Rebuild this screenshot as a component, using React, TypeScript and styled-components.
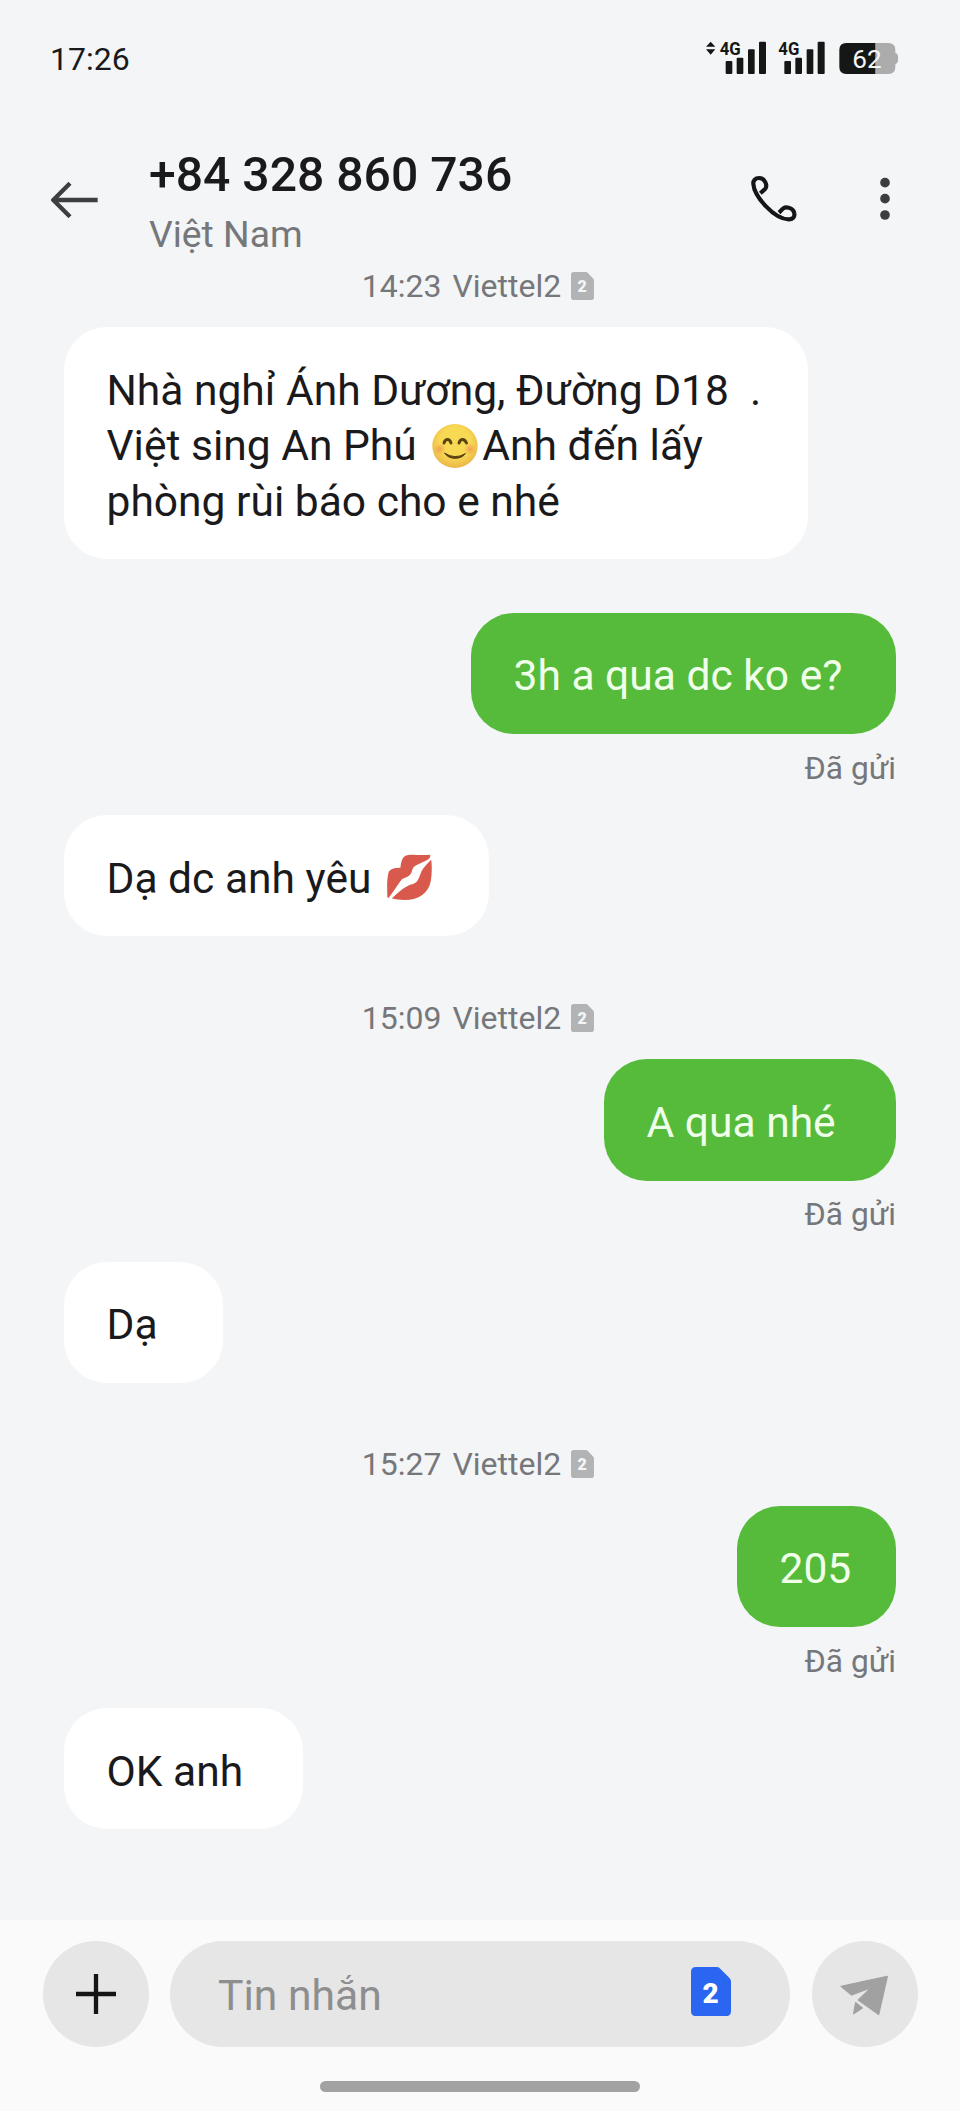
import React from "react";
import styled, { createGlobalStyle } from "styled-components";

const GlobalStyle = createGlobalStyle`
  *, *::before, *::after { box-sizing: border-box; }
  body { margin: 0; background: #f3f5f7; }
`;

const Screen = styled.main`
  width: 960px;
  height: 2111px;
  display: flex;
  flex-direction: column;
  background: #f3f5f7;
  color: #1a1a1c;
  font-family: Roboto, "Noto Sans", sans-serif;
  overflow: hidden;

  svg { display: block; flex: none; }
  svg text { font-family: Roboto, sans-serif; }
`;

const StatusBar = styled.div`
  height: 118px;
  padding: 0 60px 0 50px;
  display: flex;
  align-items: center;
  justify-content: space-between;
`;

const Clock = styled.span`
  padding-bottom: 1px;
  font-size: 32px;
  line-height: 36px;
`;

const StatusIcons = styled.div`
  padding-bottom: 4px;
`;

const Header = styled.header`
  height: 149px;
  padding-left: 51px;
  display: flex;
  align-items: flex-start;
`;

const IconButton = styled.button<{ $top: number; $left?: number }>`
  padding: 0;
  border: 0;
  background: none;
  margin: ${(p) => p.$top}px 0 0 ${(p) => p.$left ?? 0}px;
`;

const Contact = styled.div`
  width: 602px;
  padding: 28.5px 0 0 50px;
`;

const PhoneNumber = styled.h1`
  margin: 0;
  font-size: 48.1px;
  font-weight: 500;
  line-height: 56px;
  white-space: nowrap;
`;

const Country = styled.p`
  margin: 9px 0 0;
  font-size: 37.3px;
  line-height: 44px;
  color: #76777a;
`;

const Thread = styled.section`
  flex: 1;
  display: flex;
  flex-direction: column;
  padding: 0 64px;
`;

const Stamp = styled.div<{ $first?: boolean }>`
  height: 38px;
  margin: ${(p) => (p.$first ? 0 : 62.4)}px 0 ${(p) => (p.$first ? 22 : 22.5)}px;
  padding-right: 4px;
  display: flex;
  align-items: center;
  justify-content: center;
  font-size: 32px;
  line-height: 38px;
  color: #76777a;
  white-space: pre;

  svg { margin-left: 10px; }
`;

const Carrier = styled.span`
  margin-left: 11px;
`;

const Bubble = styled.div<{ $sent?: boolean; $width: number; $gap?: number }>`
  align-self: ${(p) => (p.$sent ? "flex-end" : "flex-start")};
  width: ${(p) => p.$width}px;
  margin-top: ${(p) => p.$gap ?? 0}px;
  padding: 35.5px 0 30.4px 42.5px;
  border-radius: 43px;
  background: ${(p) => (p.$sent ? "#56bb3a" : "#ffffff")};
  color: ${(p) => (p.$sent ? "#f0ffe9" : "#1a1a1c")};
  font-size: 42.55px;
  line-height: 55.5px;
  white-space: pre;
`;

const Line = styled.div`
  height: 55.5px;
  display: flex;
  align-items: center;
`;

const Emoji = styled.span<{ $lift?: number }>`
  flex: none;
  margin: 0 4px 0 5px;
  padding-bottom: ${(p) => p.$lift ?? 0}px;
`;

const Delivery = styled.div`
  align-self: flex-end;
  margin: 15.5px 0 27.3px;
  font-size: 31.7px;
  line-height: 38px;
  color: #76777a;
`;

const Composer = styled.footer`
  height: 191px;
  padding: 21px 42.5px 0;
  background: #fafafa;
`;

const ComposerRow = styled.div`
  display: flex;
  gap: 21.5px;
`;

const RoundButton = styled.button`
  width: 106px;
  height: 106px;
  padding: 0;
  border: 0;
  border-radius: 50%;
  background: #e6e6e6;
`;

const Field = styled.div`
  flex: 1;
  height: 106px;
  padding: 0 59px 5px 48px;
  border-radius: 54px;
  background: #e6e6e6;
  display: flex;
  align-items: center;
  justify-content: space-between;
`;

const Placeholder = styled.span`
  padding-top: 6px;
  font-size: 42.67px;
  line-height: 56px;
  color: #8e8e8e;
`;

const HomeBar = styled.div`
  width: 320px;
  height: 11px;
  margin: 34px auto 0;
  border-radius: 6px;
  background: #a2a2a2;
`;

const SimCard = ({ size, fill, color }: { size: number; fill: string; color: string }) => (
  <svg width={size} height={size * 1.23} viewBox="0 0 40 49">
    <path
      d="M5 0H25.5Q27.500 0 29 1.400L38.500 11Q40 12.500 40 14.500V44Q40 49 35 49H5Q0 49 0 44V5Q0 0 5 0Z"
      fill={fill}
    />
    <text x="19.500" y="35.500" fontSize="28" fontWeight="900" textAnchor="middle" fill={color}>
      2
    </text>
  </svg>
);

const Signal = ({ x }: { x: number }) => (
  <g>
    <text x={x - 18} y="105" fontSize="57" fontWeight="700" textLength="63" lengthAdjust="spacingAndGlyphs">
      4G
    </text>
    <rect x={x} y="123" width="20" height="39" rx="3" />
    <rect x={x + 33} y="113" width="20" height="49" rx="3" />
    <rect x={x + 67} y="88" width="20" height="74" rx="3" />
    <rect x={x + 100} y="65" width="21" height="97" rx="3" />
  </g>
);

const Smile = () => (
  <svg width="46" height="44" viewBox="0 0 46 44">
    <defs>
      <radialGradient id="face" cx="0.5" cy="0.42" r="0.58">
        <stop offset="0.6" stopColor="#f8d954" />
        <stop offset="1" stopColor="#e9b547" />
      </radialGradient>
      <radialGradient id="blush">
        <stop offset="0" stopColor="#f08a50" stopOpacity="0.7" />
        <stop offset="1" stopColor="#f08a50" stopOpacity="0" />
      </radialGradient>
    </defs>
    <ellipse cx="23" cy="22" rx="22.700" ry="22" fill="url(#face)" />
    <circle cx="8" cy="25" r="6" fill="url(#blush)" />
    <circle cx="38" cy="25" r="6" fill="url(#blush)" />
    <g fill="none" stroke="#5a4212" strokeWidth="2.900" strokeLinecap="round">
      <path d="M12 19Q13 15.500 15.500 15.500T19 19" />
      <path d="M27 19Q28 15.500 30.500 15.500T34.500 19" />
    </g>
    <path d="M12.500 29Q23 36 33.500 29.500Q30 34.300 23 34.300T12.500 29Z" fill="#5a3f10" stroke="#5a3f10" strokeLinejoin="round" />
  </svg>
);

const Kiss = () => (
  <svg width="44.500" height="46" viewBox="970 163 126 138" preserveAspectRatio="none">
    <g fill="#d9594c">
      <path d="M971 291C970 260 970 228 976 215C982 206 994 204 1008 204C1010 184 1014 168 1030 166C1046 164 1066 168 1091 165C1094 168 1092 174 1088 178C1074 188 1054 194 1046 202C1039 211 1042 219 1034 227C1026 234 1016 234 1009 243C999 257 988 276 976 293Q972 297 971 291Z" />
      <path d="M984 296C1000 280 1014 265 1030 258C1041 253 1051 253 1057 242C1064 231 1065 216 1073 206C1080 196 1088 188 1095 180C1097 190 1098 218 1094 244C1088 280 1060 301 1020 301C1006 301 992 299 984 296Z" />
    </g>
  </svg>
);

const Timestamp = ({ time, first }: { time: string; first?: boolean }) => (
  <Stamp $first={first}>
    <span>{time}</span>
    <Carrier>Viettel2</Carrier>
    <SimCard size={23} fill="#b2b3b5" color="#f3f5f7" />
  </Stamp>
);

export default function App() {
  return (
    <Screen>
      <GlobalStyle />
      <StatusBar>
        <Clock>17:26</Clock>
        <StatusIcons>
          <svg width="196" height="38" viewBox="72 54 588 114" fill="#151616">
            <path d="M92 65L106 80H78ZM92 104L78 88H106Z" />
            <Signal x={137} />
            <Signal x={313} />
            <path d="M586 69H625Q646 69 646 90V98Q654 100 654 108V122Q654 130 646 132V141Q646 162 625 162H586Z" fill="#acacac" />
            <path d="M586 69H499Q478 69 478 90V141Q478 162 499 162H586Z" />
            <text x="561" y="144" fontSize="79" textAnchor="middle" fill="#f5f5f5" textLength="88" lengthAdjust="spacingAndGlyphs">
              62
            </text>
          </svg>
        </StatusIcons>
      </StatusBar>

      <Header>
        <IconButton $top={64} aria-label="Back">
          <svg width="48" height="36" viewBox="153 545 144 108" fill="none" stroke="#3d3e40" strokeWidth="13">
            <path d="M293 599H160M210 549L160 599L210 649" />
          </svg>
        </IconButton>
        <Contact>
          <PhoneNumber>+84 328 860 736</PhoneNumber>
          <Country>Việt Nam</Country>
        </Contact>
        <IconButton $top={56} $left={49} aria-label="Call">
          <svg width="48" height="48" viewBox="210 462 144 144" fill="none" stroke="#151617" strokeWidth="12.500" strokeLinejoin="round">
            <path d="M241 520L256 506C263 496 255 474 237 474C226 474 219 482 220 492C223 530 283 598 326 598C338 598 345 591 343 580C341 567 328 562 318 562C308 562 305 571 297 578" />
          </svg>
        </IconButton>
        <IconButton $top={56} $left={77} aria-label="More">
          <svg width="20" height="50" viewBox="586 462 60 150" fill="#3c3d40">
            <circle cx="616" cy="488" r="14.500" />
            <circle cx="616" cy="536" r="14.500" />
            <circle cx="616" cy="585" r="14.500" />
          </svg>
        </IconButton>
      </Header>

      <Thread>
        <Timestamp time="14:23" first />
        <Bubble $width={744}>
          <Line>{"Nhà nghỉ Ánh Dương, Đường D18  ."}</Line>
          <Line>
            <span>{"Việt sing An Phú "}</span>
            <Emoji><Smile /></Emoji>
            <span>Anh đến lấy</span>
          </Line>
          <Line>phòng rùi báo cho e nhé</Line>
        </Bubble>
        <Bubble $sent $width={425} $gap={53.5}>3h a qua dc ko e?</Bubble>
        <Delivery>Đã gửi</Delivery>
        <Bubble $width={425}>
          <Line>
            <span>{"Dạ dc anh yêu "}</span>
            <Emoji $lift={2}><Kiss /></Emoji>
          </Line>
        </Bubble>

        <Timestamp time="15:09" />
        <Bubble $sent $width={292}>A qua nhé</Bubble>
        <Delivery>Đã gửi</Delivery>
        <Bubble $width={159}>Dạ</Bubble>

        <Timestamp time="15:27" />
        <Bubble $sent $width={159}>205</Bubble>
        <Delivery>Đã gửi</Delivery>
        <Bubble $width={239}>OK anh</Bubble>
      </Thread>

      <Composer>
        <ComposerRow>
          <RoundButton aria-label="Add">
            <svg width="106" height="106" viewBox="0 0 106 106" stroke="#151515" strokeWidth="4.300">
              <path d="M33 53H73M53 33V73" />
            </svg>
          </RoundButton>
          <Field>
            <Placeholder>Tin nhắn</Placeholder>
            <SimCard size={40} fill="#2b66f2" color="#ffffff" />
          </Field>
          <RoundButton aria-label="Send">
            <svg width="106" height="106" viewBox="996 123 318 318" fill="#a1a1a1" stroke="#a1a1a1" strokeWidth="4" strokeLinejoin="round">
              <path d="M1083 259L1222 229L1196 343L1135 300L1175 262L1115 285Z" />
              <path d="M1127 308L1147 324L1121 341Z" />
            </svg>
          </RoundButton>
        </ComposerRow>
        <HomeBar />
      </Composer>
    </Screen>
  );
}
